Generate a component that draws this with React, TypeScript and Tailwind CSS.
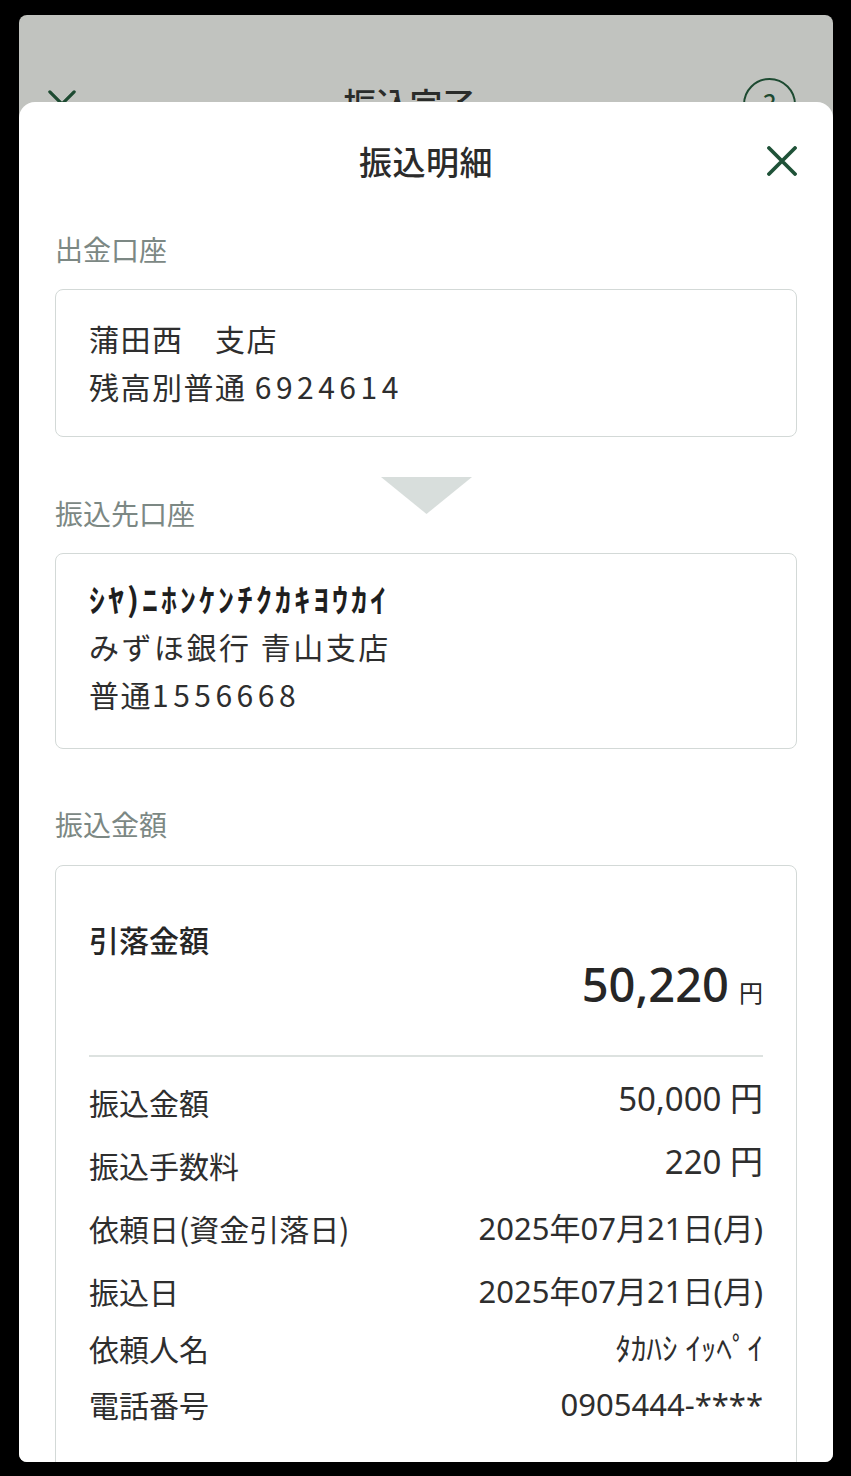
import React from 'react';

type Row = {
  label: string;
  value: string;
  height: string;
  raised?: boolean;
};

const rows: Row[] = [
  { label: '振込金額', value: '50,000 円', height: 'h-[63px]', raised: true },
  { label: '振込手数料', value: '220 円', height: 'h-[63px]', raised: true },
  { label: '依頼日(資金引落日)', value: '2025年07月21日(月)', height: 'h-[63px]' },
  { label: '振込日', value: '2025年07月21日(月)', height: 'h-[63px]' },
  { label: '依頼人名', value: 'ﾀｶﾊｼ ｲｯﾍﾟｲ', height: 'h-[50px]' },
  { label: '電話番号', value: '0905444-****', height: 'h-[62px]' },
];

const CloseIcon = ({ size, stroke, color }: { size: number; stroke: number; color: string }) => (
  <svg width={size} height={size} viewBox="0 0 30 30" fill="none">
    <path d="M2 2 28 28M28 2 2 28" stroke={color} strokeWidth={stroke} strokeLinecap="round" />
  </svg>
);

const SectionLabel = ({ children, className = '' }: { children: React.ReactNode; className?: string }) => (
  <div className={`text-[28px] leading-[40px] text-[#7c8884] ${className}`}>{children}</div>
);

export default function App() {
  return (
    <div className="w-[851px] h-[1476px] bg-black pt-[15px] pl-[19px] font-['Noto_Sans_CJK_JP','Noto_Sans_CJK_SC',sans-serif]">
      <div className="relative w-[814px] h-[1447px] rounded-[8px] overflow-hidden bg-[#c1c3bf]">
        {/* page header behind the sheet */}
        <div className="mt-[62px] h-[54px] flex items-center justify-between pl-[29px] pr-[37px]">
          <CloseIcon size={28} stroke={3.5} color="#1d4a31" />
          <div className="text-[33px] font-medium text-[#2a2c2a]">振込完了</div>
          <div className="w-[53px] h-[53px] rounded-full border-[2.5px] border-[#1d4a31] flex items-center justify-center text-[28px] text-[#1d4a31]">
            ?
          </div>
        </div>

        {/* bottom sheet */}
        <div className="absolute top-[87px] left-0 right-0 bottom-0 bg-white rounded-t-[16px] overflow-hidden px-[36px]">
          <div className="relative h-[120px] flex items-center justify-center">
            <div className="text-[33px] font-medium text-[#2b2b2b] tracking-[0.5px]">振込明細</div>
            <div className="absolute right-[0px] top-[44px]">
              <CloseIcon size={30} stroke={3.8} color="#1f5238" />
            </div>
          </div>

          <SectionLabel className="mt-[7px]">出金口座</SectionLabel>
          <div className="mt-[20px] border border-[#d3d9d7] rounded-[8px] px-[33px] pt-[24px] pb-[26px] text-[30px] leading-[48px] tracking-[1.5px] text-[#2e2e2e]">
            <div>蒲田西　支店</div>
            <div>
              残高別普通 <span className="tracking-[4.5px]">6924614</span>
            </div>
          </div>

          <div className="mt-[40px] flex justify-center">
            <svg width="91" height="37" viewBox="0 0 91 37">
              <polygon points="0,0 91,0 45.5,37" fill="#d8dedc" />
            </svg>
          </div>
          <SectionLabel className="-mt-[21px]">振込先口座</SectionLabel>
          <div className="mt-[20px] border border-[#d3d9d7] rounded-[8px] px-[33px] pt-[20px] pb-[30px] text-[30px] leading-[48px] tracking-[1.5px] text-[#2e2e2e]">
            <div className="text-[32px] font-bold tracking-[3px] text-[#1f1f1f]">ｼﾔ)ﾆﾎﾝｹﾝﾁｸｶｷﾖｳｶｲ</div>
            <div className="tracking-[2.5px]">みずほ銀行 青山支店</div>
            <div>
              普通<span className="tracking-[4.5px]">1556668</span>
            </div>
          </div>

          <SectionLabel className="mt-[55px]">振込金額</SectionLabel>
          <div className="mt-[21px] border border-[#d3d9d7] rounded-[8px] px-[33px] pt-[53px] pb-[80px] text-[#2e2e2e]">
            <div className="text-[30px] leading-[40px] font-medium text-[#262626]">引落金額</div>
            <div className="flex justify-end items-baseline leading-[50px] text-[#262626]">
              <span className="text-[47px] font-medium font-['Noto_Sans','Noto_Sans_CJK_JP',sans-serif]">50,220</span>
              <span className="ml-[10px] text-[24px]">円</span>
            </div>
            <div className="mt-[38px] h-[2px] bg-[#dde2e0]" />
            <div className="mt-[14px]">
              {rows.map((r) => (
                <div key={r.label} className={`${r.height} flex items-center justify-between`}>
                  <span className="text-[30px] text-[#2e2e2e]">{r.label}</span>
                  <span
                    className={`text-[31px] text-[#2e2e2e] font-['Noto_Sans','Noto_Sans_CJK_JP',sans-serif] ${
                      r.raised ? 'mb-[8px] text-[33px]' : ''
                    }`}
                  >
                    {r.value}
                  </span>
                </div>
              ))}
            </div>
          </div>
        </div>
      </div>
    </div>
  );
}
